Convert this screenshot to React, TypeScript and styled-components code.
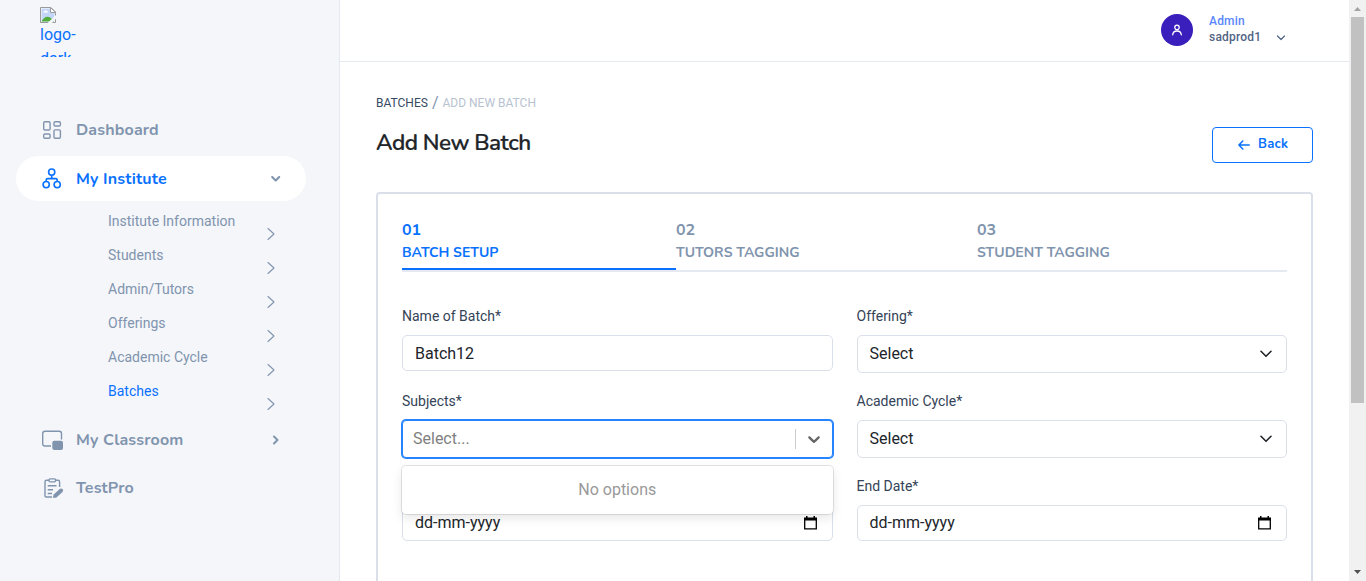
import React from "react";
import styled, { createGlobalStyle } from "styled-components";

const blue = "#0971fe";
const muted = "#8094ae";
const heading = "Nunito, Lato, 'Noto Sans', sans-serif";
const body = "Roboto, 'Liberation Sans', sans-serif";

const Global = createGlobalStyle`
  *, *::before, *::after { box-sizing: border-box; }
  html, body { margin: 0; height: 581px; overflow: hidden; background: #fff; }
  body { font-family: ${body}; color: #212529; font-size: 16px; line-height: 24px; }
`;

const Page = styled.div`
  display: flex;
  width: 1366px;
  height: 581px;
  overflow: hidden;
`;

/* ---------- sidebar ---------- */
const Sidebar = styled.aside`
  flex: 0 0 340px;
  background: #f5f6fa;
  border-right: 1px solid #e5e9f2;
  display: flex;
  flex-direction: column;
  padding: 7px 33px 0 16px;
`;
const Logo = styled.a`
  display: block;
  margin-left: 24px;
  width: 36px;
  height: 50px;
  overflow: hidden;
  color: ${blue};
  svg { display: block; }
`;
const LogoText = styled.span`
  display: block;
  line-height: 24px;
`;
const Menu = styled.nav`
  display: flex;
  flex-direction: column;
  gap: 4px;
  margin-top: 50px;
`;
const MenuItem = styled.a<{ $active?: boolean }>`
  display: flex;
  align-items: center;
  height: 45px;
  padding: 0 20px 0 24px;
  border-radius: 23px;
  background: ${(p) => (p.$active ? "#fff" : "transparent")};
  color: ${(p) => (p.$active ? blue : muted)};
  svg { flex: none; }
  &:last-child { margin-top: -1px; }
`;
const MenuText = styled.span`
  flex: 1;
  margin-left: 12px;
  font: 700 16px/24px ${heading};
  letter-spacing: 0.01em;
`;
const Chevron = styled.span`
  display: flex;
  margin-right: 5px;
  color: ${muted};
`;
const SubMenu = styled.div`
  padding: 0 31px 4px 92px;
`;
const SubItem = styled.a<{ $active?: boolean }>`
  display: flex;
  justify-content: space-between;
  height: 34px;
  font-size: 14px;
  line-height: 32px;
  color: ${(p) => (p.$active ? blue : muted)};
  svg { margin-top: 22px; color: ${muted}; flex: none; }
`;

/* ---------- main ---------- */
const Main = styled.main`
  flex: 1;
  min-width: 0;
  background: #fff;
`;
const Header = styled.header`
  height: 62px;
  border-bottom: 1px solid #e5e9f2;
  display: flex;
  align-items: center;
  justify-content: flex-end;
  padding: 0 64px 2px 0;
`;
const Avatar = styled.div`
  width: 32px;
  height: 32px;
  border-radius: 50%;
  background: #3b1fbd;
  display: flex;
  align-items: center;
  justify-content: center;
  margin-right: 16px;
`;
const User = styled.div`
  width: 67px;
  font-size: 12px;
  font-weight: 500;
  line-height: 16px;
  padding-bottom: 2px;
`;
const Role = styled.div`
  color: #5a87fb;
  letter-spacing: 0.2px;
`;
const UserName = styled.div`
  color: #526484;
  letter-spacing: 0.2px;
`;
const UserArrow = styled.span`
  display: flex;
  color: #526484;
  margin: 16px 0 0;
`;
const Content = styled.div`
  padding: 29px 36px 0;
`;
const Crumbs = styled.div`
  display: flex;
  height: 24px;
  align-items: center;
  font-size: 12px;
`;
const Crumb = styled.span<{ $current?: boolean }>`
  color: ${(p) => (p.$current ? "#b7c2d0" : "#364a63")};
`;
const Slash = styled.span`
  font-size: 16px;
  color: ${muted};
  margin: 0 4px;
`;
const TitleRow = styled.div`
  display: flex;
  justify-content: space-between;
  height: 77px;
`;
const Title = styled.h1`
  margin: 12px 0 0;
  font: 600 22.5px/32px ${heading};
  letter-spacing: -0.54px;
  color: #212529;
  -webkit-text-stroke: 0.2px #212529;
`;
const BackButton = styled.button`
  width: 101px;
  height: 36px;
  margin-top: 12px;
  border: 1px solid ${blue};
  border-radius: 4px;
  background: #fff;
  color: ${blue};
  display: flex;
  align-items: center;
  padding: 0 0 0 25px;
  gap: 8px;
  font: 700 13px/20px ${heading};
  letter-spacing: 0.02em;
  span { padding-bottom: 2px; }
`;
const Card = styled.section`
  border: 2px solid #dbdfea;
  border-radius: 4px;
  height: 480px;
  padding: 24px;
`;
const Steps = styled.div`
  display: flex;
  height: 54px;
  border-bottom: 2px solid #e5e9f2;
`;
const Step = styled.div<{ $w: number; $active?: boolean }>`
  width: ${(p) => p.$w}px;
  height: 52px;
  border-bottom: ${(p) => (p.$active ? `2px solid ${blue}` : "0")};
  color: ${(p) => (p.$active ? blue : muted)};
`;
const StepNo = styled.div`
  padding-top: 1px;
  font: 700 16px/22px ${heading};
`;
const StepName = styled.div`
  font: 700 14px/24px ${heading};
`;
const Form = styled.div`
  display: grid;
  grid-template-columns: 1fr 1fr;
  column-gap: 24px;
  grid-auto-rows: 85px;
  padding-top: 34px;
`;
const Field = styled.div`
  position: relative;
`;
const Label = styled.label`
  display: block;
  font-size: 14px;
  line-height: 20px;
  height: 29px;
  color: #344357;
`;
const Control = styled.div<{ $h: number; $drop?: number }>`
  height: ${(p) => p.$h}px;
  border: 1px solid #dbdfea;
  border-radius: 5px;
  padding: ${(p) => p.$drop || 0}px 14px 0 12px;
  display: flex;
  align-items: center;
  justify-content: space-between;
  background: #fff;
  color: #212529;
`;
const Combo = styled(Control)`
  border-color: #2684ff;
  border-radius: 4px;
  box-shadow: 0 0 0 1px #2684ff;
  padding: 0 8px 0 10px;
  color: #808080;
`;
const ComboArrow = styled.span`
  display: flex;
  margin: 8px 0;
  padding-left: 8px;
  border-left: 1px solid #ccc;
  color: #666;
`;
const Options = styled.div`
  position: absolute;
  top: 75px;
  left: 0;
  width: 100%;
  height: 48px;
  z-index: 1;
  background: #fff;
  border-radius: 4px;
  box-shadow: 0 0 0 1px rgba(0, 0, 0, 0.1), 0 4px 11px rgba(0, 0, 0, 0.1);
  color: #999;
  text-align: center;
  line-height: 48px;
`;

/* ---------- scrollbar ---------- */
const ScrollTrack = styled.div`
  flex: 0 0 17px;
  background: #f1f1f1;
  display: flex;
  flex-direction: column;
  align-items: center;
  justify-content: space-between;
  svg { display: block; flex: none; }
`;
const Thumb = styled.div`
  width: 13px;
  height: 386px;
  margin-bottom: auto;
  background: #c1c1c1;
`;

const Stroke = ({ w, h, d, sw = 1.5 }: { w: number; h: number; d: string; sw?: number }) => (
  <svg width={w} height={h} viewBox={`0 0 ${w} ${h}`} fill="none" stroke="currentColor" strokeWidth={sw} strokeLinecap="round" strokeLinejoin="round">
    <path d={d} />
  </svg>
);

const BrokenImage = () => (
  <svg width="16" height="16" viewBox="0 0 16 16">
    <path d="M.5.5H11L15.5 5v10.500H.5z" fill="#fff" stroke="#9b9b9b" />
    <path d="M1.500 1.500h8.500v4.500h4.500v8.500h-13z" fill="#c3d6f7" />
    <path d="M3 5.500c0-1 1-1 1.300-1.300C4.700 3 6.500 3 6.800 4.200c1 0 1.300.6 1.300 1.300z" fill="#fff" />
    <path d="M1.500 14.500c1.500-2.800 3.800-4.800 6-4.800S12 11.500 14 14.500z" fill="#52ad3c" />
    <path d="M7.500 16 16 8V11.500L12 16z" fill="#f5f6fa" />
    <path d="M10.500.5V5.500H15.500z" fill="#fff" stroke="#9b9b9b" />
    <path d="M.5 15.500H8" stroke="#9b9b9b" />
  </svg>
);

const DashboardIcon = () => (
  <svg width="24" height="24" viewBox="0 0 24 24" fill="none" stroke="currentColor" strokeWidth="1.400">
    <rect x="3.700" y="3.700" width="6.400" height="8.300" rx="1.200" />
    <rect x="14" y="3.700" width="6.400" height="4.300" rx="1.200" />
    <rect x="3.700" y="16" width="6.400" height="4.300" rx="1.200" />
    <rect x="14" y="11.900" width="6.400" height="8.400" rx="1.200" />
  </svg>
);

const InstituteIcon = () => (
  <svg width="24" height="24" viewBox="0 0 24 24" fill="none" stroke="currentColor" strokeWidth="1.600">
    <circle cx="11.700" cy="5.100" r="3.100" />
    <circle cx="6.200" cy="17.600" r="3.100" />
    <circle cx="17.200" cy="17.600" r="3.100" />
    <path d="M11.700 8.200v3.400M6.200 14.500v-1.400q0-1.500 1.500-1.500h8q1.500 0 1.500 1.500v1.400" />
  </svg>
);

const ClassroomIcon = () => (
  <svg width="24" height="24" viewBox="0 0 24 24">
    <path d="M11 18H5Q2.700 18 2.700 15.700V5.500Q2.700 3.200 5 3.200H19.200Q21.500 3.200 21.500 5.500V11.500" fill="none" stroke="currentColor" strokeWidth="1.400" />
    <rect x="12.300" y="12.800" width="10.700" height="9.100" rx="2" fill="currentColor" />
  </svg>
);

const TestIcon = () => (
  <svg width="24" height="24" viewBox="0 0 24 24" fill="none" stroke="currentColor" strokeWidth="1.400">
    <path d="M9 4.300H6.500Q5 4.300 5 5.800V20Q5 21 6 21H12M16 4.300H18Q19.600 4.300 19.600 5.800V11" />
    <rect x="9" y="2.900" width="6.600" height="3" rx="1.300" />
    <path d="M7.700 9.800H16.500M7.700 13.800H13M7.700 17.500H12" />
    <path d="M12.700 21.700l1-3.200 6-5.500q1.600-1.200 2.800.2t0 2.800l-6.300 5.700z" fill="currentColor" stroke="none" />
  </svg>
);

const CalendarIcon = () => (
  <svg width="14" height="14" viewBox="0 0 14 14">
    <path d="M0 1.500h13v3H0zM2 0h1.500v2H2zM9.500 0H11v2H9.500z" fill="#000" />
    <path d="M.7 3v9.900h11.600V3" fill="none" stroke="#000" strokeWidth="1.300" />
  </svg>
);

const SelectArrow = () => <Stroke w={13} h={8} sw={1.6} d="M2 1.300l5 5 5-5" />;

const subItems = ["Institute Information", "Students", "Admin/Tutors", "Offerings", "Academic Cycle", "Batches"];

export default function App() {
  return (
    <>
      <Global />
      <Page>
        <Sidebar>
          <Logo>
            <BrokenImage />
            <LogoText>logo-<br />dark</LogoText>
          </Logo>
          <Menu>
            <MenuItem>
              <DashboardIcon />
              <MenuText>Dashboard</MenuText>
            </MenuItem>
            <MenuItem $active>
              <InstituteIcon />
              <MenuText>My Institute</MenuText>
              <Chevron><Stroke w={10} h={6} sw={2} d="M1.200 1l3.500 3.500L8.200 1" /></Chevron>
            </MenuItem>
            <SubMenu>
              {subItems.map((t) => (
                <SubItem key={t} $active={t === "Batches"}>
                  {t}
                  <Stroke w={8} h={14} sw={1.1} d="M1 1.500l6 5.500-6 5.500" />
                </SubItem>
              ))}
            </SubMenu>
            <MenuItem>
              <ClassroomIcon />
              <MenuText>My Classroom</MenuText>
              <Chevron><Stroke w={10} h={10} sw={2} d="M3 1.500l3.500 3.500L3 8.500" /></Chevron>
            </MenuItem>
            <MenuItem>
              <TestIcon />
              <MenuText>TestPro</MenuText>
            </MenuItem>
          </Menu>
        </Sidebar>
        <Main>
          <Header>
            <Avatar>
              <svg width="12" height="12" viewBox="0 0 12 12" fill="none" stroke="#fff" strokeWidth="1.300" strokeLinecap="round">
                <circle cx="6" cy="3.400" r="2.200" />
                <path d="M1.700 10.800c.3-2.700 2-3.800 4.300-3.800s4 1.100 4.300 3.800" />
              </svg>
            </Avatar>
            <User>
              <Role>Admin</Role>
              <UserName>sadprod1</UserName>
            </User>
            <UserArrow><Stroke w={9} h={6} sw={1.2} d="M1.500 1L5 4.500 8.500 1" /></UserArrow>
          </Header>
          <Content>
            <Crumbs>
              <Crumb>BATCHES</Crumb>
              <Slash>/</Slash>
              <Crumb $current>ADD NEW BATCH</Crumb>
            </Crumbs>
            <TitleRow>
              <Title>Add New Batch</Title>
              <BackButton>
                <Stroke w={12} h={10} sw={1.5} d="M11.200 5H1M4.800 1L.9 5l3.900 4" />
                <span>Back</span>
              </BackButton>
            </TitleRow>
            <Card>
              <Steps>
                <Step $w={274} $active><StepNo>01</StepNo><StepName>BATCH SETUP</StepName></Step>
                <Step $w={301}><StepNo>02</StepNo><StepName>TUTORS TAGGING</StepName></Step>
                <Step $w={310}><StepNo>03</StepNo><StepName>STUDENT TAGGING</StepName></Step>
              </Steps>
              <Form>
                <Field><Label>Name of Batch*</Label><Control $h={36} $drop={2}>Batch12</Control></Field>
                <Field><Label>Offering*</Label><Control $h={38}>Select<SelectArrow /></Control></Field>
                <Field>
                  <Label>Subjects*</Label>
                  <Combo $h={38}>
                    Select...
                    <ComboArrow>
                      <svg width="20" height="20" viewBox="0 0 20 20" fill="currentColor">
                        <path d="M4.516 7.548c0.436-0.446 1.043-0.481 1.576 0l3.908 3.747 3.908-3.747c0.533-0.481 1.141-0.446 1.574 0 0.436 0.445 0.408 1.197 0 1.615-0.406 0.418-4.695 4.502-4.695 4.502-0.217 0.223-0.502 0.335-0.787 0.335s-0.570-0.112-0.789-0.335c0 0-4.287-4.084-4.695-4.502s-0.436-1.170 0-1.615z" />
                      </svg>
                    </ComboArrow>
                  </Combo>
                  <Options>No options</Options>
                </Field>
                <Field><Label>Academic Cycle*</Label><Control $h={38}>Select<SelectArrow /></Control></Field>
                <Field><Label>Start Date*</Label><Control $h={36}>dd-mm-yyyy<CalendarIcon /></Control></Field>
                <Field><Label>End Date*</Label><Control $h={36}>dd-mm-yyyy<CalendarIcon /></Control></Field>
              </Form>
            </Card>
          </Content>
        </Main>
        <ScrollTrack>
          <svg width="17" height="17" viewBox="0 0 17 17"><path d="M5 11l3.500-4 3.500 4z" fill="#a3a3a3" /></svg>
          <Thumb />
          <svg width="17" height="17" viewBox="0 0 17 17"><path d="M5 6l3.500 4L12 6z" fill="#505050" /></svg>
        </ScrollTrack>
      </Page>
    </>
  );
}
